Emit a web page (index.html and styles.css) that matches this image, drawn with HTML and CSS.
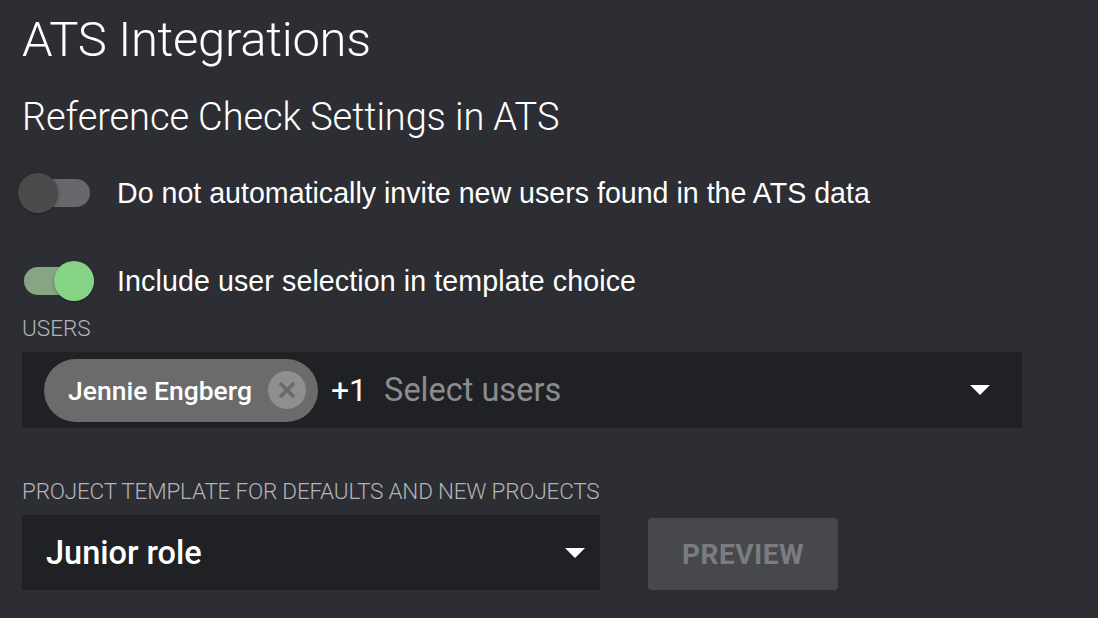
FILE: index.html
```html
<!DOCTYPE html>
<html>
<head>
<meta charset="utf-8">
<link rel="stylesheet" href="styles.css">
</head>
<body>
<div class="page">
  <h1 class="title">ATS Integrations</h1>
  <h2 class="subtitle">Reference Check Settings in ATS</h2>

  <div class="toggle-row row-first">
    <div class="switch off"><div class="track"></div><div class="knob"></div></div>
    <span class="toggle-label">Do not automatically invite new users found in the ATS data</span>
  </div>

  <div class="toggle-row row-second">
    <div class="switch on"><div class="track"></div><div class="knob"></div></div>
    <span class="toggle-label">Include user selection in template choice</span>
  </div>

  <div class="field-label users-label">USERS</div>
  <div class="users-input">
    <div class="chip">
      <span class="chip-text">Jennie Engberg</span>
      <span class="chip-close">
        <svg width="22" height="22" viewBox="0 0 22 22"><path d="M4 4 L18 18 M18 4 L4 18" stroke="#6a6a6a" stroke-width="3.6" stroke-linecap="butt"/></svg>
      </span>
    </div>
    <span class="more">+1</span>
    <span class="placeholder">Select users</span>
    <span class="caret caret-users"></span>
  </div>

  <div class="field-label template-label">PROJECT TEMPLATE FOR DEFAULTS AND NEW PROJECTS</div>
  <div class="template-row">
    <div class="select">
      <span class="select-value">Junior role</span>
      <span class="caret"></span>
    </div>
    <button class="preview">PREVIEW</button>
  </div>
</div>
</body>
</html>
```

FILE: styles.css
```css
html, body {
  margin: 0;
  padding: 0;
  background: #2c2e33;
  color: #ffffff;
  overflow: hidden;
}
body {
  width: 1098px;
  height: 618px;
  font-family: Roboto, "Liberation Sans", sans-serif;
}
.page {
  padding: 12px 0 0 22px;
}
.title {
  margin: 0;
  font-weight: 300;
  font-size: 49px;
  line-height: 56px;
  letter-spacing: -0.3px;
}
.subtitle {
  margin: 27px 0 0 0;
  font-weight: 300;
  font-size: 38px;
  line-height: 44px;
  letter-spacing: -0.1px;
}
.toggle-row {
  display: flex;
  align-items: center;
  height: 40px;
}
.row-first { margin-top: 34px; }
.row-second { margin-top: 48px; }
.switch {
  position: relative;
  width: 76px;
  height: 40px;
  margin-left: -4px;
  flex: none;
}
.switch .track {
  position: absolute;
  left: 2px;
  top: 6px;
  width: 70px;
  height: 28px;
  border-radius: 14px;
}
.switch .knob {
  position: absolute;
  top: 0;
  width: 40px;
  height: 40px;
  border-radius: 50%;
  box-shadow: 0 1px 3px rgba(0,0,0,0.35);
}
.switch.off .track { background: #67686c; }
.switch.off .knob { left: 0; background: #4b4b4c; }
.switch.on .track { background: #87a585; left: 6px; }
.switch.on .knob { left: 36px; background: #86d385; }
.toggle-label {
  margin-left: 23px;
  font-family: "Liberation Sans", Arial, sans-serif;
  font-size: 28.6px;
  color: #ffffff;
}
.row-second .toggle-label { letter-spacing: 0.1px; }
.field-label {
  font-family: Roboto, sans-serif;
  font-weight: 300;
  color: #b3b4b7;
  font-size: 22.5px;
  line-height: 24px;
}
.users-label { margin-top: 15px; }
.users-input {
  margin-top: 12px;
  width: 1000px;
  height: 76px;
  background: #202124;
  display: flex;
  align-items: center;
  box-sizing: border-box;
  padding-left: 22px;
  padding-right: 32px;
}
.chip {
  display: flex;
  align-items: center;
  height: 63px;
  background: #6b6b6b;
  border-radius: 32px;
  padding: 0 12px 0 24px;
}
.chip-text {
  font-weight: 500;
  font-size: 26.5px;
  color: #ffffff;
}
.chip-close {
  margin-left: 16px;
  width: 38px;
  height: 38px;
  border-radius: 50%;
  background: #8f8f8f;
  display: flex;
  align-items: center;
  justify-content: center;
}
.more {
  margin-left: 13px;
  font-weight: 400;
  font-size: 32px;
  color: #ffffff;
}
.placeholder {
  margin-left: 17px;
  font-size: 32.5px;
  color: #8b8c8f;
  flex: 1;
}
.caret {
  width: 0;
  height: 0;
  border-left: 10px solid transparent;
  border-right: 10px solid transparent;
  border-top: 10px solid #ffffff;
}
.template-label { margin-top: 51px; letter-spacing: -0.2px; }
.template-row {
  margin-top: 12px;
  display: flex;
  align-items: flex-start;
}
.select {
  width: 578px;
  height: 75px;
  background: #202124;
  display: flex;
  align-items: center;
  box-sizing: border-box;
  padding: 0 15px 0 24px;
}
.select-value {
  flex: 1;
  font-weight: 500;
  font-size: 32.5px;
  color: #ffffff;
}
.preview {
  margin-left: 48px;
  margin-top: 3px;
  width: 190px;
  height: 72px;
  border: none;
  border-radius: 4px;
  background: #47484c;
  color: #7b7c80;
  font-family: Roboto, sans-serif;
  font-weight: 700;
  font-size: 28px;
  letter-spacing: 0.5px;
}
```
